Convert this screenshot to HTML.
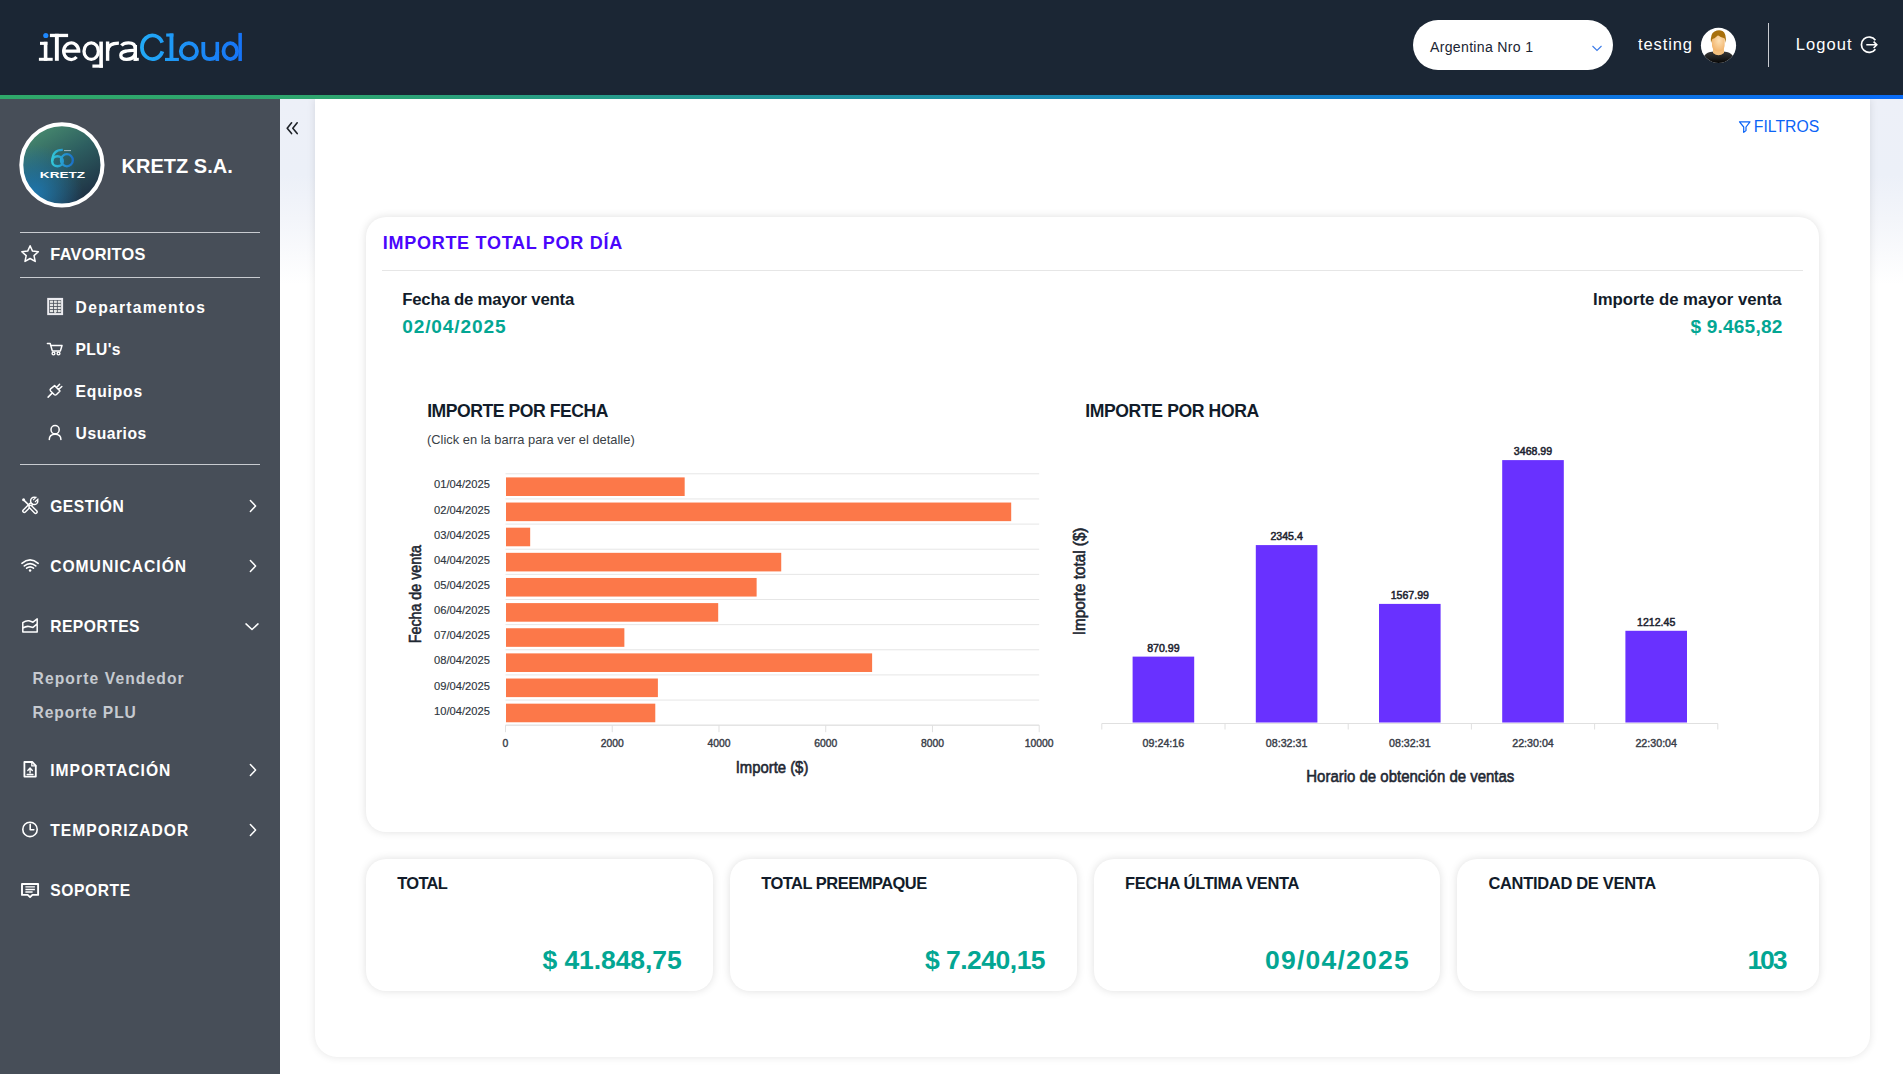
<!DOCTYPE html>
<html><head><meta charset="utf-8"><title>iTegraCloud</title>
<style>
html,body{margin:0;padding:0;width:1903px;height:1074px;overflow:hidden;background:#fff;font-family:"Liberation Sans",sans-serif}
.t{position:absolute;white-space:nowrap;line-height:1}
.ic{position:absolute;overflow:visible}
#hdr{position:absolute;left:0;top:0;width:1903px;height:95px;background:#1b2634}
#hline{position:absolute;z-index:2;left:0;top:95px;width:1903px;height:4px;background:linear-gradient(90deg,#2fa86a 0%,#2ea56e 17%,#1e8fab 50%,#0f78d8 80%,#0a6cf8 100%)}
#side{position:absolute;left:0;top:99px;width:280px;height:975px;background:#474e58}
#gutter{position:absolute;left:280px;top:99px;width:35px;height:975px;background:linear-gradient(180deg,#edf0f8 0px,#ecf0f8 76px,#f3f5fa 120px,#fff 185px)}
#rgut{position:absolute;left:1870px;top:99px;width:33px;height:975px;background:linear-gradient(180deg,#edf0f8 0px,#ecf0f8 76px,#f3f5fa 120px,#fff 185px)}
#panel{position:absolute;left:315px;top:99px;width:1555px;height:958px;background:#fff;border-radius:0 0 22px 22px;box-shadow:0 0 9px rgba(0,0,0,.11)}
#pill{position:absolute;left:1413px;top:20px;width:200px;height:50px;border-radius:25px;background:#fff}
.hl{position:absolute;left:20px;width:240px;height:1.3px;background:#c8cbd0}
.card{position:absolute;background:#fff;border-radius:20px;box-shadow:0 0 9px rgba(0,0,0,.13)}
svg text{font-family:"Liberation Sans",sans-serif}
.cl{font-size:11.8px;fill:#2e3540;stroke:#2e3540;stroke-width:0.15px}
.cx{font-size:11.8px;fill:#3a4049;stroke:#3a4049;stroke-width:0.45px}
.cv{font-size:11.5px;fill:#1e2430;stroke:#1e2430;stroke-width:0.55px}
.ct{font-size:16.2px;fill:#1f2833;stroke:#1f2833;stroke-width:0.6px}
.cs{font-size:13px;fill:#3a3f47}
</style></head><body>
<div id="hdr"></div><div id="hline"></div>
<svg class="ic" style="left:0;top:0" width="260" height="95" viewBox="0 0 260 95">
<defs><linearGradient id="lgc" gradientUnits="userSpaceOnUse" x1="140" y1="0" x2="242" y2="0"><stop offset="0" stop-color="#22aaf6"/><stop offset="1" stop-color="#1673f6"/></linearGradient></defs>
<g fill="#fff">
<rect x="40" y="41.8" width="7.4" height="3.1"/><rect x="43.8" y="41.8" width="3.6" height="19"/><rect x="38.9" y="57.8" width="13.8" height="3"/>
<rect x="49.9" y="33.8" width="18.2" height="3.3"/><rect x="54.9" y="33.8" width="3.9" height="27"/>
<rect x="99.3" y="41.6" width="3.6" height="26.1"/><rect x="92.4" y="64.5" width="10.5" height="3.2"/>
<rect x="105.9" y="41.5" width="3.4" height="19.3"/>
<rect x="133.6" y="45" width="3.4" height="15.8"/><rect x="133.6" y="57.8" width="5.2" height="3"/>
</g>
<g fill="none" stroke="#fff" stroke-width="3.3">
<path d="M63.6 51.2 H78.7 A7.5 8.3 0 1 0 76.6 57"/>
<ellipse cx="91.2" cy="51.15" rx="7.2" ry="8.3"/>
<path d="M107.6 51 Q108 43.1 118.9 43.1"/>
<path d="M121.4 45.6 Q123.5 42.9 128.5 42.9 Q135.3 42.9 135.3 48.5"/>
<path d="M135.3 50.5 Q130 50.3 126.5 51 Q120.8 52 120.8 55.3 Q120.8 59.4 126.6 59.4 Q133 59.4 135.3 54"/>
</g>
<circle cx="45.8" cy="35.5" r="2.6" fill="#1e88ff"/>
<g fill="url(#lgc)">
<rect x="166.2" y="33.5" width="7.2" height="3.1"/><rect x="169.5" y="33.5" width="3.9" height="27.5"/><rect x="165" y="57.9" width="13.9" height="3.1"/>
<rect x="215.5" y="41.9" width="3.6" height="19.1"/>
<rect x="238.4" y="32.9" width="3.5" height="28.1"/>
</g>
<g fill="none" stroke="url(#lgc)" stroke-width="3.8">
<path d="M162.2 42.6 A10.55 11.85 0 1 0 162.4 51.4"/>
<ellipse cx="188.9" cy="51.15" rx="8.1" ry="7.95"/>
<path d="M203.3 41.9 V52.5 Q203.3 59.1 209.8 59.1 Q217.3 59.1 217.3 52"/>
<ellipse cx="230.3" cy="51.15" rx="6.8" ry="7.95"/>
</g>
</svg>
<div id="pill"></div>
<div class="t" style="left:1430.00px;top:39.66px;font-size:14.11px;font-weight:400;color:#1b2533;letter-spacing:0.300px;">Argentina Nro 1</div>
<svg class="ic" style="left:1590px;top:43px" width="14" height="10" viewBox="0 0 14 10"><path d="M2.5 3 L7 7.5 L11.5 3" fill="none" stroke="#3b7be8" stroke-width="1.1"/></svg>
<div class="t" style="left:1638.00px;top:36.23px;font-size:16.50px;font-weight:400;color:#fff;letter-spacing:0.900px;">testing</div>
<svg class="ic" style="left:1700px;top:27px" width="37" height="37" viewBox="0 0 37 37">
<defs><clipPath id="avc"><circle cx="18.5" cy="18.4" r="17.6"/></clipPath>
<radialGradient id="skin" cx="55%" cy="40%" r="60%"><stop offset="0" stop-color="#fde0b4"/><stop offset="1" stop-color="#f2b56e"/></radialGradient>
<linearGradient id="shirt" x1="0" y1="0" x2="0" y2="1"><stop offset="0" stop-color="#3a3a3a"/><stop offset="0.6" stop-color="#1a1a1a"/><stop offset="1" stop-color="#000"/></linearGradient></defs>
<g clip-path="url(#avc)"><rect width="37" height="37" fill="#fff"/>
<path d="M3 37 L3.5 30.5 Q5 26 10 25 Q14 24.2 18.5 24.2 Q23 24.2 27 25 Q32 26 33.5 30.5 L34 37 Z" fill="url(#shirt)"/>
<path d="M13 21 L13 26 Q18.5 30.5 24 26 L24 21 Z" fill="#f5c07c"/>
<path d="M11.8 12 Q11.6 6.5 18.3 6.3 Q25 6.5 24.8 12 L24.6 19 Q24 24 18.3 24.6 Q12.6 24 12 19 Z" fill="url(#skin)"/>
<path d="M11 16 Q10 6.5 14.5 4.5 Q18.5 2.5 22.5 4 Q26.5 6 25.8 16 L25 12.5 Q24.8 11 23 10.8 Q20.5 10.5 18.8 8.8 Q17.8 8 16.6 9.5 Q14.5 11.5 12.3 12 Z" fill="#a8700c"/>
</g></svg>
<div style="position:absolute;left:1768px;top:23px;width:1.3px;height:44px;background:#c9ccd2"></div>
<div class="t" style="left:1795.70px;top:36.23px;font-size:16.50px;font-weight:400;color:#fff;letter-spacing:1.100px;">Logout</div>
<svg class="ic" style="left:0;top:0" width="1903" height="95" viewBox="0 0 1903 95">
<path d="M1875.4 40.2 A7.7 7.7 0 1 0 1875.4 49.2" fill="none" stroke="#fff" stroke-width="1.7"/>
<path d="M1866.3 44.8 H1876.8 M1873.6 41.6 L1876.8 44.8 L1873.6 48" fill="none" stroke="#fff" stroke-width="1.6"/></svg>
<div id="side"></div><div id="gutter"></div><div id="rgut"></div>
<svg class="ic" style="left:19.4px;top:122.4px" width="86" height="86" viewBox="0 0 86 86">
<defs><linearGradient id="kg" x1="0.2" y1="0" x2="0.8" y2="1">
<stop offset="0" stop-color="#4a8e70"/><stop offset="0.45" stop-color="#2d5e60"/><stop offset="1" stop-color="#1c2a40"/></linearGradient>
<radialGradient id="kb" cx="0.15" cy="0.85" r="0.6"><stop offset="0" stop-color="#1e76ad"/><stop offset="1" stop-color="#1e76ad" stop-opacity="0"/></radialGradient></defs>
<circle cx="43" cy="43" r="41" fill="url(#kg)"/>
<circle cx="43" cy="43" r="41" fill="url(#kb)"/>
<circle cx="42.9" cy="42.9" r="40.6" fill="none" stroke="#fff" stroke-width="4"/>
<defs><linearGradient id="k60" gradientUnits="userSpaceOnUse" x1="32" y1="0" x2="55" y2="0"><stop offset="0" stop-color="#34cbd8"/><stop offset="1" stop-color="#1a6cc8"/></linearGradient></defs>
<ellipse cx="38.5" cy="39.25" rx="5.3" ry="5.05" fill="none" stroke="url(#k60)" stroke-width="2.4"/>
<path d="M33.3 39 C33.3 31 37.5 27.6 43.8 27.9" fill="none" stroke="url(#k60)" stroke-width="2.3"/>
<ellipse cx="47.9" cy="38.25" rx="5.95" ry="6.1" fill="none" stroke="url(#k60)" stroke-width="2.3"/>
<rect x="45" y="28" width="7" height="1.1" fill="#c9d6dc" opacity="0.7"/>
<text x="20.8" y="55.8" font-family="Liberation Sans" font-weight="700" font-size="9.4" fill="#fff" textLength="45.4" lengthAdjust="spacingAndGlyphs">KRETZ</text>
</svg>
<div class="t" style="left:121.60px;top:156.69px;font-size:19.97px;font-weight:700;color:#fff;letter-spacing:0.033px;">KRETZ S.A.</div>
<div class="hl" style="top:232px"></div><div class="hl" style="top:277px"></div><div class="hl" style="top:464px"></div>
<div class="t" style="left:50.30px;top:246.37px;font-size:16.34px;font-weight:700;color:#fff;letter-spacing:0.275px;">FAVORITOS</div>
<div class="t" style="left:75.60px;top:299.76px;font-size:15.64px;font-weight:700;color:#fff;letter-spacing:1.292px;">Departamentos</div>
<div class="t" style="left:75.60px;top:341.86px;font-size:15.64px;font-weight:700;color:#fff;letter-spacing:0.275px;">PLU's</div>
<div class="t" style="left:75.60px;top:383.76px;font-size:15.64px;font-weight:700;color:#fff;letter-spacing:0.817px;">Equipos</div>
<div class="t" style="left:75.60px;top:425.76px;font-size:15.64px;font-weight:700;color:#fff;letter-spacing:0.543px;">Usuarios</div>
<div class="t" style="left:50.20px;top:498.56px;font-size:15.64px;font-weight:700;color:#fff;letter-spacing:0.533px;">GESTIÓN</div>
<div class="t" style="left:50.20px;top:558.76px;font-size:15.64px;font-weight:700;color:#fff;letter-spacing:0.991px;">COMUNICACIÓN</div>
<div class="t" style="left:50.20px;top:618.56px;font-size:15.64px;font-weight:700;color:#fff;letter-spacing:0.486px;">REPORTES</div>
<div class="t" style="left:50.20px;top:762.76px;font-size:15.64px;font-weight:700;color:#fff;letter-spacing:1.020px;">IMPORTACIÓN</div>
<div class="t" style="left:50.20px;top:822.86px;font-size:15.64px;font-weight:700;color:#fff;letter-spacing:1.027px;">TEMPORIZADOR</div>
<div class="t" style="left:50.20px;top:882.76px;font-size:15.64px;font-weight:700;color:#fff;letter-spacing:0.583px;">SOPORTE</div>
<div class="t" style="left:32.50px;top:670.76px;font-size:15.64px;font-weight:700;color:#c6cad0;letter-spacing:1.107px;">Reporte Vendedor</div>
<div class="t" style="left:32.50px;top:704.86px;font-size:15.64px;font-weight:700;color:#c6cad0;letter-spacing:0.870px;">Reporte PLU</div>
<svg class="ic" style="left:0;top:0" width="280" height="1074" viewBox="0 0 280 1074"><path d="M250.4 500.6 L255.6 506 L250.4 511.4" fill="none" stroke="#fff" stroke-linecap="round" stroke-linejoin="round" stroke-width="1.5" stroke-linecap="butt" stroke-linejoin="miter"/><path d="M250.4 560.6 L255.6 566 L250.4 571.4" fill="none" stroke="#fff" stroke-linecap="round" stroke-linejoin="round" stroke-width="1.5" stroke-linecap="butt" stroke-linejoin="miter"/><path d="M250.4 764.6 L255.6 770 L250.4 775.4" fill="none" stroke="#fff" stroke-linecap="round" stroke-linejoin="round" stroke-width="1.5" stroke-linecap="butt" stroke-linejoin="miter"/><path d="M250.4 824.6 L255.6 830 L250.4 835.4" fill="none" stroke="#fff" stroke-linecap="round" stroke-linejoin="round" stroke-width="1.5" stroke-linecap="butt" stroke-linejoin="miter"/><path d="M246 623.9 L252 629.5 L258 623.9" fill="none" stroke="#fff" stroke-linecap="round" stroke-linejoin="round" stroke-width="1.5" stroke-linecap="butt" stroke-linejoin="miter"/><path d="M30.10 245.70 L32.51 251.08 L38.37 251.71 L34.00 255.67 L35.21 261.44 L30.10 258.50 L24.99 261.44 L26.20 255.67 L21.83 251.71 L27.69 251.08 Z" fill="none" stroke="#fff" stroke-linecap="round" stroke-linejoin="round" stroke-width="1.5" stroke-linejoin="miter"/><rect x="47.2" y="297.9" width="15.9" height="17.2" fill="#ececf0"/><rect x="49.2" y="300" width="11.9" height="13.1" fill="#474e58"/><rect x="49.9" y="300.6" width="3.1" height="2.3" fill="#e4e6e4"/><rect x="49.9" y="303.7" width="3.1" height="2.3" fill="#e4e6e4"/><rect x="49.9" y="306.8" width="3.1" height="2.3" fill="#e4e6e4"/><rect x="49.9" y="309.9" width="3.1" height="2.3" fill="#e4e6e4"/><rect x="53.8" y="300.6" width="3.1" height="2.3" fill="#e4e6e4"/><rect x="53.8" y="303.7" width="3.1" height="2.3" fill="#e4e6e4"/><rect x="53.8" y="306.8" width="3.1" height="2.3" fill="#e4e6e4"/><rect x="53.8" y="309.9" width="3.1" height="2.3" fill="#e4e6e4"/><rect x="57.7" y="300.6" width="3.1" height="2.3" fill="#e4e6e4"/><rect x="57.7" y="303.7" width="3.1" height="2.3" fill="#e4e6e4"/><rect x="57.7" y="306.8" width="3.1" height="2.3" fill="#e4e6e4"/><rect x="57.7" y="309.9" width="3.1" height="2.3" fill="#e4e6e4"/><rect x="54.3" y="312.1" width="1.8" height="1.2" fill="#e4e6e4"/><path d="M47.4 343.5 H50.2 L52.3 350.9 H60.4 L62 345.5 H51.3" fill="none" stroke="#fff" stroke-linecap="round" stroke-linejoin="round" stroke-width="1.5"/><circle cx="53.5" cy="353.5" r="1.4" fill="none" stroke="#fff" stroke-linecap="round" stroke-linejoin="round" stroke-width="1.4"/><circle cx="58.5" cy="353.5" r="1.4" fill="none" stroke="#fff" stroke-linecap="round" stroke-linejoin="round" stroke-width="1.4"/><path d="M54.6 385.6 L60 391 L56.5 394.5 Q55.3 395.6 54.1 394.5 L50.6 391 Q49.6 389.9 50.6 388.9 Z M48.1 397.1 L51.6 393.6 M56.6 387.5 L59.6 384.3 M58.6 389.5 L61.8 386.5" fill="none" stroke="#fff" stroke-linecap="round" stroke-linejoin="round" stroke-width="1.5"/><circle cx="55.1" cy="429.7" r="4.1" fill="none" stroke="#fff" stroke-linecap="round" stroke-linejoin="round" stroke-width="1.5"/><path d="M49.3 439.6 Q49.3 434.3 55.1 434.3 Q60.9 434.3 60.9 439.6" fill="none" stroke="#fff" stroke-linecap="round" stroke-linejoin="round" stroke-width="1.5"/><line x1="24.3" y1="511" x2="30.8" y2="504.5" stroke="#fff" stroke-width="4.4" stroke-linecap="round"/><line x1="24.3" y1="511" x2="30.8" y2="504.5" stroke="#474e58" stroke-width="1.5" stroke-linecap="round"/><line x1="30.5" y1="506.8" x2="35.6" y2="511.9" stroke="#fff" stroke-width="4.4" stroke-linecap="round"/><line x1="30.5" y1="506.8" x2="35.6" y2="511.9" stroke="#474e58" stroke-width="1.5" stroke-linecap="round"/><line x1="23.6" y1="499.9" x2="29.6" y2="505.9" stroke="#fff" stroke-width="1.5"/><circle cx="23.6" cy="499.8" r="1.5" fill="#fff"/><circle cx="34.2" cy="500.9" r="3.6" fill="none" stroke="#fff" stroke-width="1.5"/><path d="M34.4 500.7 L37.6 497.5" stroke="#474e58" stroke-width="2.2"/><path d="M33.1 500.2 L36.5 496.8 M35 502 L38.4 498.6" stroke="#fff" stroke-width="1.1"/><path d="M21.9 563.3 Q30.07 556.3 38.2 563.3 M24.3 565.9 Q30.07 561.2 35.8 565.9 M26.6 568.2 Q30.07 565.4 33.5 568.2" fill="none" stroke="#fff" stroke-linecap="round" stroke-linejoin="round" stroke-width="1.6"/><circle cx="30.07" cy="570.4" r="1.25" fill="#fff"/><path d="M22.8 632.1 V622.6 Q26 620.3 29 620.8 Q31.3 621.4 33 622.2 L37.2 618.9 V632.1 Z M22.8 628.2 Q26 625.9 29 626.5 Q31.3 627.1 33 627.4 L37.2 623.9" fill="none" stroke="#fff" stroke-linecap="round" stroke-linejoin="round" stroke-width="1.5" stroke-linejoin="miter" stroke-linecap="butt"/><path d="M24.4 762 H32.2 L35.8 765.6 V776.6 H24.4 Z" fill="none" stroke="#fff" stroke-linecap="round" stroke-linejoin="round" stroke-width="1.8" stroke-linejoin="miter"/><path d="M31.8 762 V765.9 H35.8" fill="none" stroke="#fff" stroke-linecap="round" stroke-linejoin="round" stroke-width="1.3" stroke-linejoin="miter"/><path d="M30.07 772.7 V768.2 M27.8 770.4 L30.07 768.1 L32.3 770.4 M27.2 774.5 H32.9" fill="none" stroke="#fff" stroke-linecap="round" stroke-linejoin="round" stroke-width="1.4" stroke-linecap="butt"/><circle cx="30" cy="829.4" r="7.2" fill="none" stroke="#fff" stroke-linecap="round" stroke-linejoin="round" stroke-width="1.6"/><path d="M30.2 824.4 V829.8 H33.8" fill="none" stroke="#fff" stroke-linecap="round" stroke-linejoin="round" stroke-width="1.6" stroke-linecap="butt" stroke-linejoin="miter"/><path d="M22 884 H38.1 V894.9 H32.4 L30.07 897.1 L27.7 894.9 H22 Z" fill="none" stroke="#fff" stroke-linecap="round" stroke-linejoin="round" stroke-width="1.9" stroke-linejoin="miter"/><path d="M25.4 886.9 H34.9 M25.4 889.5 H34.9 M25.4 892 H32.6" stroke="#fff" stroke-width="1.4"/></svg>
<div id="panel"></div>
<svg class="ic" style="left:0;top:0" width="1903" height="200" viewBox="0 0 1903 200">
<path d="M291.6 122.8 L287.2 128.2 L291.6 133.6 M297.2 122.8 L292.8 128.2 L297.2 133.6" fill="none" stroke="#1e2228" stroke-width="1.6" stroke-linecap="round" stroke-linejoin="round"/>
<path d="M1739.5 121.8 H1750 L1746 127 V130.6 L1743.7 132.4 V127 Z" fill="none" stroke="#0b64f6" stroke-width="1.2" stroke-linejoin="round"/>
</svg>
<div class="t" style="left:1753.80px;top:119.34px;font-size:15.78px;font-weight:400;color:#0b64f6;letter-spacing:0.000px;">FILTROS</div>
<div class="card" style="left:366px;top:217px;width:1453px;height:615px"></div>
<div class="t" style="left:382.80px;top:233.65px;font-size:18.02px;font-weight:700;color:#4a06fc;letter-spacing:0.710px;">IMPORTE TOTAL POR DÍA</div>
<div style="position:absolute;left:382px;top:270px;width:1421px;height:1px;background:#e6e6e6"></div>
<div class="t" style="left:402.20px;top:291.51px;font-size:16.76px;font-weight:700;color:#121c2a;letter-spacing:-0.205px;">Fecha de mayor venta</div>
<div class="t" style="left:402.20px;top:317.20px;font-size:19.13px;font-weight:700;color:#03a693;letter-spacing:0.856px;">02/04/2025</div>
<div class="t" style="left:1593.00px;top:291.51px;font-size:16.76px;font-weight:700;color:#121c2a;letter-spacing:-0.019px;">Importe de mayor venta</div>
<div class="t" style="left:1690.40px;top:317.00px;font-size:19.13px;font-weight:700;color:#03a693;letter-spacing:0.178px;">$ 9.465,82</div>
<div class="t" style="left:427.20px;top:402.70px;font-size:17.60px;font-weight:700;color:#121c2a;letter-spacing:-0.456px;">IMPORTE POR FECHA</div>
<div class="t" style="left:1085.20px;top:402.70px;font-size:17.60px;font-weight:700;color:#121c2a;letter-spacing:-0.387px;">IMPORTE POR HORA</div>
<div class="card" style="left:366px;top:859px;width:346.8px;height:132px"></div>
<div class="t" style="left:397.20px;top:875.45px;font-size:16.48px;font-weight:700;color:#121c2a;letter-spacing:-0.675px;">TOTAL</div>
<div class="t" style="left:542.50px;top:946.74px;font-size:26.54px;font-weight:700;color:#03a693;letter-spacing:-0.100px;">$ 41.848,75</div>
<div class="card" style="left:730px;top:859px;width:346.8px;height:132px"></div>
<div class="t" style="left:761.20px;top:875.45px;font-size:16.48px;font-weight:700;color:#121c2a;letter-spacing:-0.500px;">TOTAL PREEMPAQUE</div>
<div class="t" style="left:925.00px;top:946.74px;font-size:26.54px;font-weight:700;color:#03a693;letter-spacing:-0.533px;">$ 7.240,15</div>
<div class="card" style="left:1093.8px;top:859px;width:346.1px;height:132px"></div>
<div class="t" style="left:1125.00px;top:875.45px;font-size:16.48px;font-weight:700;color:#121c2a;letter-spacing:-0.347px;">FECHA ÚLTIMA VENTA</div>
<div class="t" style="left:1265.00px;top:946.74px;font-size:26.54px;font-weight:700;color:#03a693;letter-spacing:1.222px;">09/04/2025</div>
<div class="card" style="left:1457.2px;top:859px;width:361.6px;height:132px"></div>
<div class="t" style="left:1488.40px;top:875.45px;font-size:16.48px;font-weight:700;color:#121c2a;letter-spacing:-0.300px;">CANTIDAD DE VENTA</div>
<div class="t" style="left:1747.40px;top:946.74px;font-size:26.54px;font-weight:700;color:#03a693;letter-spacing:-2.050px;">103</div>
<svg class="ic" style="left:0;top:0" width="1903" height="1074" viewBox="0 0 1903 1074"><line x1="505.5" y1="473.80" x2="1039.2" y2="473.80" stroke="#e6e6e6" stroke-width="1"/><line x1="505.5" y1="498.94" x2="1039.2" y2="498.94" stroke="#e6e6e6" stroke-width="1"/><line x1="505.5" y1="524.08" x2="1039.2" y2="524.08" stroke="#e6e6e6" stroke-width="1"/><line x1="505.5" y1="549.22" x2="1039.2" y2="549.22" stroke="#e6e6e6" stroke-width="1"/><line x1="505.5" y1="574.36" x2="1039.2" y2="574.36" stroke="#e6e6e6" stroke-width="1"/><line x1="505.5" y1="599.50" x2="1039.2" y2="599.50" stroke="#e6e6e6" stroke-width="1"/><line x1="505.5" y1="624.64" x2="1039.2" y2="624.64" stroke="#e6e6e6" stroke-width="1"/><line x1="505.5" y1="649.78" x2="1039.2" y2="649.78" stroke="#e6e6e6" stroke-width="1"/><line x1="505.5" y1="674.92" x2="1039.2" y2="674.92" stroke="#e6e6e6" stroke-width="1"/><line x1="505.5" y1="700.06" x2="1039.2" y2="700.06" stroke="#e6e6e6" stroke-width="1"/><line x1="505.5" y1="725.20" x2="1039.2" y2="725.20" stroke="#e6e6e6" stroke-width="1"/><rect x="506.0" y="477.40" width="178.68" height="18.6" fill="#fc7849"/><text x="489.9" y="488.47" text-anchor="end" class="cl" textLength="55.9" lengthAdjust="spacingAndGlyphs">01/04/2025</text><rect x="506.0" y="502.54" width="505.20" height="18.6" fill="#fc7849"/><text x="489.9" y="513.61" text-anchor="end" class="cl" textLength="55.9" lengthAdjust="spacingAndGlyphs">02/04/2025</text><rect x="506.0" y="527.68" width="24.18" height="18.6" fill="#fc7849"/><text x="489.9" y="538.75" text-anchor="end" class="cl" textLength="55.9" lengthAdjust="spacingAndGlyphs">03/04/2025</text><rect x="506.0" y="552.82" width="275.23" height="18.6" fill="#fc7849"/><text x="489.9" y="563.89" text-anchor="end" class="cl" textLength="55.9" lengthAdjust="spacingAndGlyphs">04/04/2025</text><rect x="506.0" y="577.96" width="250.63" height="18.6" fill="#fc7849"/><text x="489.9" y="589.03" text-anchor="end" class="cl" textLength="55.9" lengthAdjust="spacingAndGlyphs">05/04/2025</text><rect x="506.0" y="603.10" width="212.20" height="18.6" fill="#fc7849"/><text x="489.9" y="614.17" text-anchor="end" class="cl" textLength="55.9" lengthAdjust="spacingAndGlyphs">06/04/2025</text><rect x="506.0" y="628.24" width="118.37" height="18.6" fill="#fc7849"/><text x="489.9" y="639.31" text-anchor="end" class="cl" textLength="55.9" lengthAdjust="spacingAndGlyphs">07/04/2025</text><rect x="506.0" y="653.38" width="366.12" height="18.6" fill="#fc7849"/><text x="489.9" y="664.45" text-anchor="end" class="cl" textLength="55.9" lengthAdjust="spacingAndGlyphs">08/04/2025</text><rect x="506.0" y="678.52" width="151.89" height="18.6" fill="#fc7849"/><text x="489.9" y="689.59" text-anchor="end" class="cl" textLength="55.9" lengthAdjust="spacingAndGlyphs">09/04/2025</text><rect x="506.0" y="703.66" width="149.28" height="18.6" fill="#fc7849"/><text x="489.9" y="714.73" text-anchor="end" class="cl" textLength="55.9" lengthAdjust="spacingAndGlyphs">10/04/2025</text><line x1="505.5" y1="725.2" x2="1039.2" y2="725.2" stroke="#e0e0e0" stroke-width="1"/><line x1="505.50" y1="725.2" x2="505.50" y2="732.2" stroke="#e0e0e0" stroke-width="1"/><text x="505.50" y="747" text-anchor="middle" class="cx" textLength="5.8" lengthAdjust="spacingAndGlyphs">0</text><line x1="612.24" y1="725.2" x2="612.24" y2="732.2" stroke="#e0e0e0" stroke-width="1"/><text x="612.24" y="747" text-anchor="middle" class="cx" textLength="23.0" lengthAdjust="spacingAndGlyphs">2000</text><line x1="718.98" y1="725.2" x2="718.98" y2="732.2" stroke="#e0e0e0" stroke-width="1"/><text x="718.98" y="747" text-anchor="middle" class="cx" textLength="23.0" lengthAdjust="spacingAndGlyphs">4000</text><line x1="825.72" y1="725.2" x2="825.72" y2="732.2" stroke="#e0e0e0" stroke-width="1"/><text x="825.72" y="747" text-anchor="middle" class="cx" textLength="23.0" lengthAdjust="spacingAndGlyphs">6000</text><line x1="932.46" y1="725.2" x2="932.46" y2="732.2" stroke="#e0e0e0" stroke-width="1"/><text x="932.46" y="747" text-anchor="middle" class="cx" textLength="23.0" lengthAdjust="spacingAndGlyphs">8000</text><line x1="1039.20" y1="725.2" x2="1039.20" y2="732.2" stroke="#e0e0e0" stroke-width="1"/><text x="1039.20" y="747" text-anchor="middle" class="cx" textLength="28.8" lengthAdjust="spacingAndGlyphs">10000</text><text x="772" y="773" text-anchor="middle" class="ct" textLength="72.7" lengthAdjust="spacingAndGlyphs">Importe ($)</text><text transform="translate(421,594.1) rotate(-90)" text-anchor="middle" class="ct" textLength="98.3" lengthAdjust="spacingAndGlyphs">Fecha de venta</text><text x="427" y="444" class="cs" textLength="207.7" lengthAdjust="spacingAndGlyphs">(Click en la barra para ver el detalle)</text><line x1="1101.8" y1="723.5" x2="1717.8" y2="723.5" stroke="#e0e0e0" stroke-width="1"/><line x1="1101.80" y1="723.5" x2="1101.80" y2="729.5" stroke="#e0e0e0" stroke-width="1"/><line x1="1225.00" y1="723.5" x2="1225.00" y2="729.5" stroke="#e0e0e0" stroke-width="1"/><line x1="1348.20" y1="723.5" x2="1348.20" y2="729.5" stroke="#e0e0e0" stroke-width="1"/><line x1="1471.40" y1="723.5" x2="1471.40" y2="729.5" stroke="#e0e0e0" stroke-width="1"/><line x1="1594.60" y1="723.5" x2="1594.60" y2="729.5" stroke="#e0e0e0" stroke-width="1"/><line x1="1717.80" y1="723.5" x2="1717.80" y2="729.5" stroke="#e0e0e0" stroke-width="1"/><rect x="1132.60" y="656.62" width="61.6" height="65.88" fill="#6931ff"/><text x="1163.40" y="651.82" text-anchor="middle" class="cv" textLength="32.4" lengthAdjust="spacingAndGlyphs">870.99</text><text x="1163.40" y="747" text-anchor="middle" class="cx" textLength="41.6" lengthAdjust="spacingAndGlyphs">09:24:16</text><rect x="1255.80" y="545.09" width="61.6" height="177.41" fill="#6931ff"/><text x="1286.60" y="540.29" text-anchor="middle" class="cv" textLength="32.4" lengthAdjust="spacingAndGlyphs">2345.4</text><text x="1286.60" y="747" text-anchor="middle" class="cx" textLength="41.6" lengthAdjust="spacingAndGlyphs">08:32:31</text><rect x="1379.00" y="603.90" width="61.6" height="118.60" fill="#6931ff"/><text x="1409.80" y="599.10" text-anchor="middle" class="cv" textLength="38.3" lengthAdjust="spacingAndGlyphs">1567.99</text><text x="1409.80" y="747" text-anchor="middle" class="cx" textLength="41.6" lengthAdjust="spacingAndGlyphs">08:32:31</text><rect x="1502.20" y="460.11" width="61.6" height="262.39" fill="#6931ff"/><text x="1533.00" y="455.31" text-anchor="middle" class="cv" textLength="38.3" lengthAdjust="spacingAndGlyphs">3468.99</text><text x="1533.00" y="747" text-anchor="middle" class="cx" textLength="41.6" lengthAdjust="spacingAndGlyphs">22:30:04</text><rect x="1625.40" y="630.79" width="61.6" height="91.71" fill="#6931ff"/><text x="1656.20" y="625.99" text-anchor="middle" class="cv" textLength="38.3" lengthAdjust="spacingAndGlyphs">1212.45</text><text x="1656.20" y="747" text-anchor="middle" class="cx" textLength="41.6" lengthAdjust="spacingAndGlyphs">22:30:04</text><text x="1410.3" y="782.3" text-anchor="middle" class="ct" textLength="208" lengthAdjust="spacingAndGlyphs">Horario de obtención de ventas</text><text transform="translate(1084.8,581.4) rotate(-90)" text-anchor="middle" class="ct" textLength="107.7" lengthAdjust="spacingAndGlyphs">Importe total ($)</text></svg>
</body></html>
